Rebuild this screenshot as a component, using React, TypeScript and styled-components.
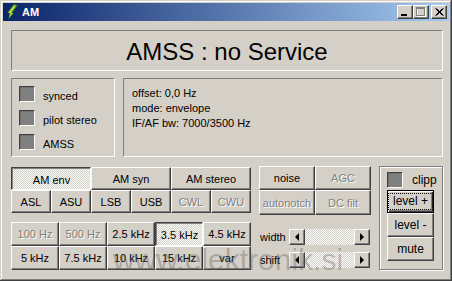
import React from "react";
import styled, { createGlobalStyle, css } from "styled-components";

const face = "#d4d0c8";

const GlobalStyle = createGlobalStyle`
  html, body {
    margin: 0;
    padding: 0;
    background: ${face};
  }
  body {
    font-family: "Liberation Sans", Arial, sans-serif;
    font-size: 11px;
    color: #000;
  }
`;

const raised = css`
  border: 1px solid;
  border-color: #fff #404040 #404040 #fff;
  box-shadow: inset -1px -1px #808080;
`;

const sunkenEdge = css`
  border: 1px solid;
  border-color: #404040 #fff #fff #404040;
  box-shadow: inset 1px 1px #808080;
`;

const hatch = css`
  background: repeating-conic-gradient(#fff 0 25%, ${face} 0 50%) 0 0 / 2px 2px;
`;

const Window = styled.div`
  position: relative;
  box-sizing: border-box;
  width: 452px;
  height: 281px;
  padding: 3px;
  display: flex;
  flex-direction: column;
  background: ${face};
  box-shadow: inset -1px -1px #404040, inset 1px 1px ${face},
    inset -2px -2px #808080, inset 2px 2px #fff;
  overflow: hidden;
`;

const TitleBar = styled.div`
  height: 18px;
  display: flex;
  align-items: center;
  padding: 0 2px 0 2px;
  background: linear-gradient(to right, #0a246a, #a6caf0);
`;

const TitleText = styled.span`
  color: #fff;
  font-weight: bold;
  font-size: 11px;
  margin-left: 3px;
  flex: 1;
`;

const TitleButton = styled.div<{ $gap?: boolean }>`
  box-sizing: border-box;
  width: 16px;
  height: 14px;
  margin-left: ${(p) => (p.$gap ? "2px" : "0")};
  background: ${face};
  ${raised};
  display: flex;
  align-items: center;
  justify-content: center;
`;

const Body = styled.div`
  flex: 1;
  display: flex;
  flex-direction: column;
  padding: 9px 6px 0 8px;
`;

const Header = styled.div`
  box-sizing: border-box;
  height: 41px;
  border: 1px solid;
  border-color: #808080 #fff #fff #808080;
  display: flex;
  align-items: center;
  justify-content: center;
  padding-top: 2px;
  font-size: 24px;
`;

const InfoRow = styled.div`
  display: flex;
  gap: 8px;
  height: 79px;
  margin-top: 7px;
`;

const Panel = styled.div<{ $width?: number }>`
  box-sizing: border-box;
  border: 1px solid;
  border-color: #808080 #fff #fff #808080;
  ${(p) => (p.$width ? `width: ${p.$width}px;` : "flex: 1;")}
`;

const StatusList = styled(Panel)`
  display: flex;
  flex-direction: column;
  gap: 8px;
  padding: 7px 0 0 7px;
`;

const StatusItem = styled.div`
  display: flex;
  align-items: center;
  gap: 8px;
  height: 16px;
`;

const StatusLabel = styled.span`
  padding-top: 4px;
`;

const Led = styled.div`
  box-sizing: border-box;
  width: 16px;
  height: 16px;
  background: #808080;
  border: 1px solid;
  border-color: #404040 #fff #fff #404040;
  box-shadow: inset 1px 1px #707070;
  flex: none;
`;

const InfoText = styled(Panel)`
  padding: 7px 0 0 8px;
  line-height: 15px;
`;

const Lower = styled.div`
  display: flex;
  gap: 8px;
  margin-top: 9px;
`;

const LeftCol = styled.div`
  width: 240px;
  display: flex;
  flex-direction: column;
`;

const ModeGrid = styled.div`
  display: grid;
  grid-template-columns: repeat(6, 40px);
  grid-template-rows: 23px 23px;
  margin-top: 1px;
`;

const BandGrid = styled.div`
  display: grid;
  grid-template-columns: repeat(5, 48px);
  grid-template-rows: 24px 24px;
  margin-top: 9px;
`;

const Btn = styled.div<{ $on?: boolean; $off?: boolean; $span?: number }>`
  box-sizing: border-box;
  display: flex;
  align-items: center;
  justify-content: center;
  white-space: nowrap;
  font-size: 11px;
  background: ${face};
  ${(p) => (p.$span ? `grid-column: span ${p.$span};` : "")}
  ${(p) =>
    p.$on
      ? css`
          ${hatch};
          ${sunkenEdge};
          padding: 2px 0 0 1px;
        `
      : raised}
  ${(p) =>
    p.$off &&
    css`
      color: #808080;
      text-shadow: 1px 1px #fff;
    `}
`;

const MidCol = styled.div`
  width: 112px;
  display: flex;
  flex-direction: column;
`;

const NoiseGrid = styled.div`
  display: grid;
  grid-template-columns: 56px 56px;
  grid-template-rows: 24px 25px;
`;

const Sliders = styled.div`
  display: flex;
  flex-direction: column;
  gap: 7px;
  margin-top: 14px;
`;

const SliderRow = styled.div`
  display: flex;
  align-items: center;
  height: 16px;
`;

const SliderLabel = styled.span`
  width: 30px;
  padding-left: 1px;
  box-sizing: border-box;
`;

const ScrollBar = styled.div`
  display: flex;
  width: 81px;
  height: 16px;
`;

const ScrollArrow = styled.div`
  box-sizing: border-box;
  width: 16px;
  height: 16px;
  background: ${face};
  ${raised};
  display: flex;
  align-items: center;
  justify-content: center;
`;

const Track = styled.div`
  flex: 1;
  ${hatch};
`;

const Arrow = styled.div<{ $dir: "left" | "right" }>`
  width: 0;
  height: 0;
  border-top: 4px solid transparent;
  border-bottom: 4px solid transparent;
  ${(p) =>
    p.$dir === "left"
      ? "border-right: 4px solid #000;"
      : "border-left: 4px solid #000;"}
`;

const LevelGroup = styled.div`
  box-sizing: border-box;
  width: 64px;
  height: 104px;
  border: 1px solid #808080;
  box-shadow: inset 1px 1px #fff, 1px 1px #fff;
  padding: 5px 0 0 7px;
  display: flex;
  flex-direction: column;
`;

const ClipRow = styled.div`
  display: flex;
  align-items: center;
  gap: 9px;
  height: 16px;
  font-size: 12px;
`;

const LevelButtons = styled.div`
  display: grid;
  grid-template-columns: 47px;
  grid-template-rows: 23px 24px 24px;
  margin-top: 2px;
`;

const LevelBtn = styled(Btn)`
  font-size: 12px;
`;

const DefaultBtn = styled(LevelBtn)`
  border: 1px solid #000;
  box-shadow: inset 1px 1px #fff, inset -1px -1px #404040,
    inset -2px -2px #808080;
`;

const FocusRect = styled.span`
  border: 1px dotted #000;
  padding: 1px 4px 2px;
  line-height: 12px;
`;

const Watermark = styled.span`
  position: absolute;
  left: 113px;
  top: 245px;
  font-family: "Liberation Sans", Arial, sans-serif;
  font-size: 30px;
  line-height: 30px;
  color: rgba(90, 90, 90, 0.35);
  pointer-events: none;
  white-space: nowrap;
`;

function AppIcon() {
  return (
    <svg width="14" height="16" viewBox="0 0 14 16">
      <path d="M9 0 L13 1 L7 9 L9 9 L3 16 L5 9 L2 9 Z" fill="#2f7d1e" />
      <path d="M9 1 L11 2 L6 9 L8 9 L4 14 L5 9 L3 9 Z" fill="#b6d83a" />
    </svg>
  );
}

export default function App() {
  return (
    <>
      <GlobalStyle />
      <Window>
        <TitleBar>
          <AppIcon />
          <TitleText>AM</TitleText>
          <TitleButton>
            <svg width="8" height="8" viewBox="0 0 8 8">
              <rect x="0" y="6" width="6" height="2" fill="#000" />
            </svg>
          </TitleButton>
          <TitleButton>
            <svg width="10" height="10" viewBox="0 0 10 10">
              <rect x="1.5" y="1.5" width="8" height="8" fill="none" stroke="#fff" />
              <rect x="0.5" y="0.5" width="8" height="8" fill="none" stroke="#808080" />
              <rect x="0" y="1" width="9" height="1" fill="#808080" />
            </svg>
          </TitleButton>
          <TitleButton $gap>
            <svg width="9" height="8" viewBox="0 0 9 8">
              <path d="M0.5 0.5 L7.5 7.5 M1.5 0.5 L8.5 7.5 M7.5 0.5 L0.5 7.5 M8.5 0.5 L1.5 7.5" stroke="#000" strokeWidth="1" />
            </svg>
          </TitleButton>
        </TitleBar>
        <Body>
          <Header>AMSS : no Service</Header>
          <InfoRow>
            <StatusList $width={104}>
              <StatusItem>
                <Led />
                <StatusLabel>synced</StatusLabel>
              </StatusItem>
              <StatusItem>
                <Led />
                <StatusLabel>pilot stereo</StatusLabel>
              </StatusItem>
              <StatusItem>
                <Led />
                <StatusLabel>AMSS</StatusLabel>
              </StatusItem>
            </StatusList>
            <InfoText>
              <div>offset: 0,0 Hz</div>
              <div>mode: envelope</div>
              <div>IF/AF bw: 7000/3500 Hz</div>
            </InfoText>
          </InfoRow>
          <Lower>
            <LeftCol>
              <ModeGrid>
                <Btn $span={2} $on>
                  AM env
                </Btn>
                <Btn $span={2}>AM syn</Btn>
                <Btn $span={2}>AM stereo</Btn>
                <Btn>ASL</Btn>
                <Btn>ASU</Btn>
                <Btn>LSB</Btn>
                <Btn>USB</Btn>
                <Btn $off>CWL</Btn>
                <Btn $off>CWU</Btn>
              </ModeGrid>
              <BandGrid>
                <Btn $off>100 Hz</Btn>
                <Btn $off>500 Hz</Btn>
                <Btn>2.5 kHz</Btn>
                <Btn $on>3.5 kHz</Btn>
                <Btn>4.5 kHz</Btn>
                <Btn>5 kHz</Btn>
                <Btn>7.5 kHz</Btn>
                <Btn>10 kHz</Btn>
                <Btn>15 kHz</Btn>
                <Btn>var</Btn>
              </BandGrid>
            </LeftCol>
            <MidCol>
              <NoiseGrid>
                <Btn>noise</Btn>
                <Btn $off>AGC</Btn>
                <Btn $off>autonotch</Btn>
                <Btn $off>DC filt</Btn>
              </NoiseGrid>
              <Sliders>
                <SliderRow>
                  <SliderLabel>width</SliderLabel>
                  <ScrollBar>
                    <ScrollArrow>
                      <Arrow $dir="left" />
                    </ScrollArrow>
                    <Track />
                    <ScrollArrow>
                      <Arrow $dir="right" />
                    </ScrollArrow>
                  </ScrollBar>
                </SliderRow>
                <SliderRow>
                  <SliderLabel>shift</SliderLabel>
                  <ScrollBar>
                    <ScrollArrow>
                      <Arrow $dir="left" />
                    </ScrollArrow>
                    <Track />
                    <ScrollArrow>
                      <Arrow $dir="right" />
                    </ScrollArrow>
                  </ScrollBar>
                </SliderRow>
              </Sliders>
            </MidCol>
            <LevelGroup>
              <ClipRow>
                <Led />
                clipp
              </ClipRow>
              <LevelButtons>
                <DefaultBtn>
                  <FocusRect>level +</FocusRect>
                </DefaultBtn>
                <LevelBtn>level -</LevelBtn>
                <LevelBtn>mute</LevelBtn>
              </LevelButtons>
            </LevelGroup>
          </Lower>
        </Body>
        <Watermark>www.elektronik.si</Watermark>
      </Window>
    </>
  );
}
